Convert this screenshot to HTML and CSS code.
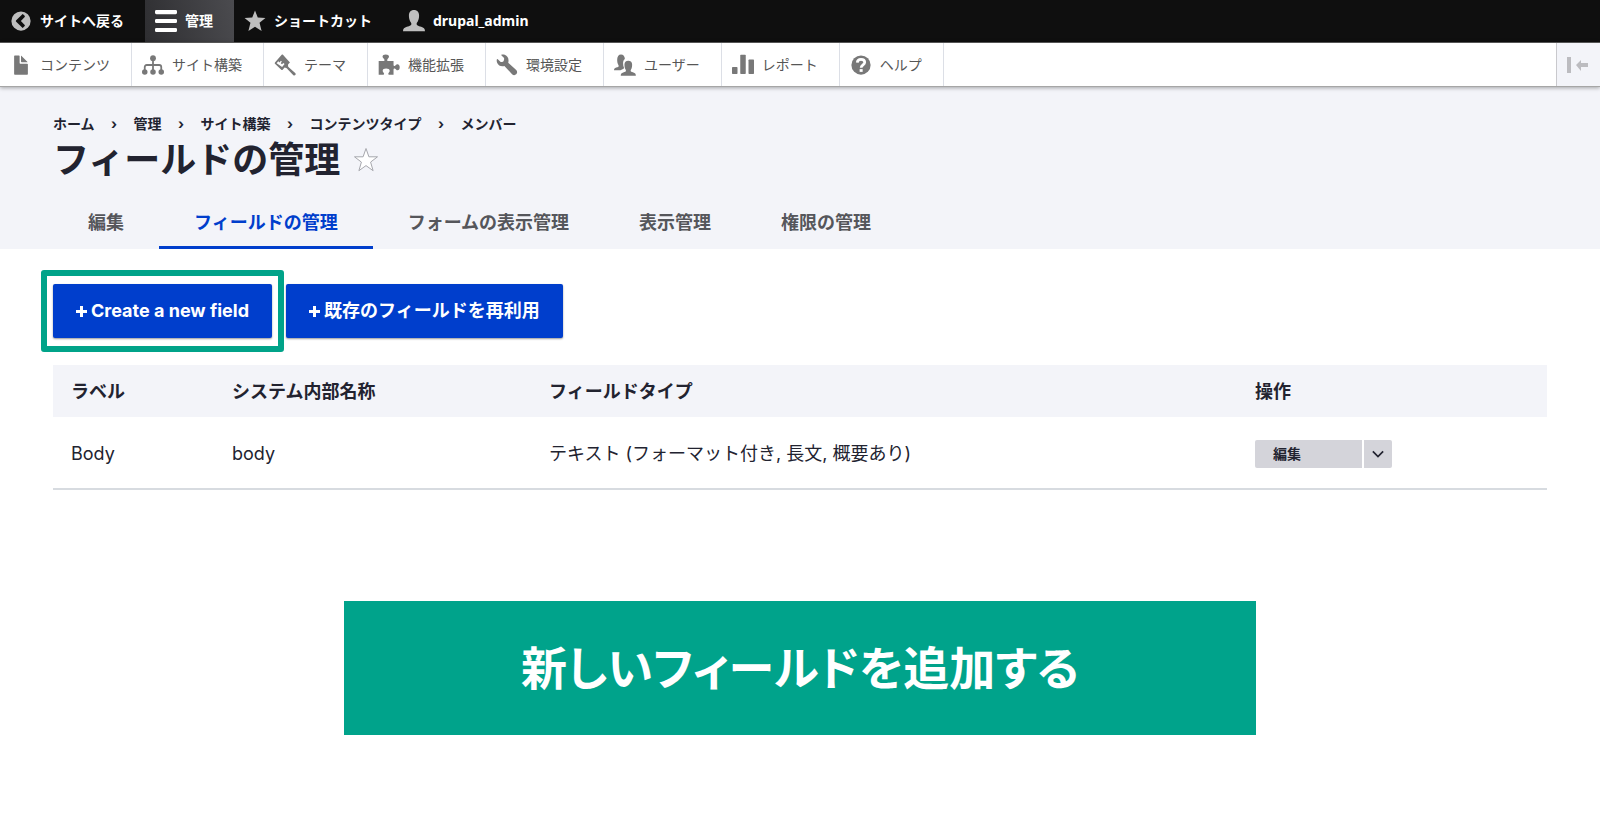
FILE: index.html
```html
<!DOCTYPE html>
<html lang="ja">
<head>
<meta charset="utf-8">
<title>フィールドの管理</title>
<link rel="stylesheet" href="styles.css">
</head>
<body>
<nav class="bar" aria-label="ツールバー">
  <a class="bar-item" href="#">
    <svg class="icon" viewBox="0 0 16 16"><path fill="#bebebe" fill-rule="evenodd" d="M8 1a7 7 0 1 0 0 14A7 7 0 0 0 8 1zm2.3 2.9L9.2 2.9 4.5 7.4c-.4.4-.4.8 0 1.2l4.7 4.5 1.5-1.5c.2-.2.2-.5 0-.7L7.900 8l2.800-2.900c.2-.2.2-.5 0-.7z"/></svg>
    <span>サイトへ戻る</span>
  </a>
  <a class="bar-item bar-item-active" href="#">
    <svg class="icon" viewBox="0 0 16 16"><path fill="#fff" d="M1 0h14a1 1 0 0 1 1 1v1a1 1 0 0 1-1 1H1a1 1 0 0 1-1-1V1a1 1 0 0 1 1-1zM1 6.500h14a1 1 0 0 1 1 1v1a1 1 0 0 1-1 1H1a1 1 0 0 1-1-1v-1a1 1 0 0 1 1-1zM1 13h14a1 1 0 0 1 1 1v1a1 1 0 0 1-1 1H1a1 1 0 0 1-1-1v-1a1 1 0 0 1 1-1z"/></svg>
    <span>管理</span>
  </a>
  <a class="bar-item" href="#">
    <svg class="icon" viewBox="0 0 16 16"><path fill="#bebebe" d="M8 .3l2 5.200 5.600.3-4.300 3.500 1.500 5.900L8 12.100l-4.800 3.100 1.500-5.900L.4 5.800 6 5.500z"/></svg>
    <span>ショートカット</span>
  </a>
  <a class="bar-item" href="#">
    <svg class="icon" viewBox="0 0 16 16"><path fill="#bebebe" d="M0 15.500c0-2 1-2.700 2.800-3.300 2.300-.8 3.200-1 3.300-2.100 0-.8-.5-1-1-2.100C4.600 6.800 4.300 5.600 4.300 4 4.300 1.500 5.700 0 8 0s3.700 1.500 3.700 4c0 1.600-.3 2.800-.8 4-.5 1.100-1 1.300-1 2.100.1 1.100 1 1.300 3.300 2.100 1.800.6 2.800 1.300 2.800 3.300z"/></svg>
    <span>drupal_admin</span>
  </a>
</nav>
<nav class="tray" aria-label="管理メニュー">
  <a class="tray-item" href="#">
    <svg class="icon" viewBox="0 0 16 16"><path d="M12.500 7h-5c-.3 0-.5-.2-.5-.5v-5c0-.3-.2-.5-.5-.5h-3c-.3 0-.5.2-.5.5v13c0 .3.2.5.5.5h9c.3 0 .5-.2.5-.5v-7c0-.3-.2-.5-.5-.5z"/><path d="M8.500 6h4c.3 0 .3-.2.100-.4L8.400 1.400c-.2-.2-.4-.1-.4.100v4c0 .3.2.5.5.5z"/></svg>
    <span>コンテンツ</span>
  </a>
  <a class="tray-item" href="#">
    <svg class="icon" viewBox="0 0 16 16"><circle cx="8" cy="3" r="2.100"/><circle cx="2" cy="13" r="2"/><circle cx="8" cy="13" r="2"/><circle cx="14" cy="13" r="2"/><path fill="none" stroke="#787878" stroke-width="1.300" d="M8 4v9M2 12v-2.500c0-1 .5-1.500 1.500-1.500h9c1 0 1.500.5 1.500 1.500V12"/></svg>
    <span>サイト構築</span>
  </a>
  <a class="tray-item" href="#">
    <svg class="icon" viewBox="0 0 16 16"><path fill-rule="evenodd" d="M5.600.6L.7 6.100c-.3.3-.3.700 0 1l4.600 4.300c.3.3.7.3 1 0l1.400-1.500 1.200.2c.5.1.7.5 1 .9l4 4.200c.6.6 1.200.5 1.600.1s.4-1-.1-1.500l-4.500-4c-.4-.4-.7-.6-.7-1.100l.1-1.200 1.300-1.400L6.500.6c-.3-.3-.6-.3-.9 0zM1.900 6.700l1.200-1.400.9.800 1-1.200.7.600-.8 1.200.9.800 1-1 .9.800-1.800 2.100z"/></svg>
    <span>テーマ</span>
  </a>
  <a class="tray-item" href="#">
    <svg class="icon" viewBox="0 0 16 16"><path d="M.5 5h3.700c.8 0 .7-.6.2-1.300C3.700 2.700 3.300 2.500 3.300 1.800 3.300.9 4.200.3 5.600.3s2.400.6 2.400 1.500c0 .7-.4.900-1 1.900C6.500 4.400 6.500 5 7.200 5h4.100v3c0 .9.600 1 1.200.5.700-.6.900-1 1.700-1 1 0 1.600 1 1.600 2.200s-.6 2.200-1.600 2.200c-.8 0-1-.5-1.700-1.100-.6-.5-1.200-.3-1.200.6V15H8.100c-.8 0-.8-.6-.3-1.300.5-.6.7-1 .7-1.500 0-1-1.100-1.600-2.600-1.600s-2.500.6-2.500 1.600c0 .5.200.9.700 1.500.5.700.5 1.300-.3 1.300H.5z"/></svg>
    <span>機能拡張</span>
  </a>
  <a class="tray-item" href="#">
    <svg class="icon" viewBox="0 0 16 16"><path d="M14.700 11.700L8.900 6.400c.7-2.700-.3-4.900-2.500-5.800C5.300.2 4.300.2 3.900.5c-.3.3 0 .5.3.8l1.500 1.500c.3.4.3.8.1 1.500-.2.800-.6 1.400-1.400 1.500-.6.100-1 0-1.400-.4L1.500 4C1.200 3.700.9 3.500.7 3.800c-.3.400-.3 1.600.2 2.700.8 1.800 2.800 2.900 5.200 2.200l5.600 6c.9.900 2.100.9 3 .1.900-.9.900-2.200 0-3.100z"/></svg>
    <span>環境設定</span>
  </a>
  <a class="tray-item" href="#">
    <svg class="icon" viewBox="0 0 16 16"><path d="M0 11.900c0-1.200.5-1.600 1.600-2 1.300-.4 1.800-.6 1.800-1.200 0-.5-.3-.7-.6-1.400C2.500 6.500 2.300 5.600 2.300 4.400 2.300 1.700 3.300.3 5.100.3c1.700 0 2.800 1.400 2.800 3.300-.9.700-1.300 1.700-1.300 3.100 0 1.300.2 2.400.6 3.200.2.500.3.700-.6 1-.9.300-1.500.6-1.900 1z"/><path d="M4.900 15.800c0-1.500.6-2 1.800-2.400 1.400-.5 2-.6 2-1.300 0-.5-.3-.7-.6-1.400-.3-.8-.5-1.700-.5-2.900 0-1.800 1-2.900 2.800-2.900s2.800 1.100 2.800 2.900c0 1.200-.2 2.100-.5 2.900-.3.700-.6.900-.6 1.400 0 .7.600.8 2 1.300 1.200.4 1.800.9 1.800 2.400z"/></svg>
    <span>ユーザー</span>
  </a>
  <a class="tray-item" href="#">
    <svg class="icon" viewBox="0 0 16 16"><rect x="0" y="9.500" width="4" height="5" rx=".5"/><rect x="6" y=".5" width="4" height="14" rx=".5"/><rect x="12" y="4" width="4" height="10.500" rx=".5"/></svg>
    <span>レポート</span>
  </a>
  <a class="tray-item" href="#">
    <svg class="icon" viewBox="0 0 16 16"><circle cx="8" cy="8" r="7"/><path fill="none" stroke="#fff" stroke-width="2" d="M5.300 6.300C5.400 4.600 6.500 3.900 8 3.900c1.600 0 2.700.8 2.700 2.100 0 1.900-2.600 1.900-2.600 4"/><rect x="7" y="11" width="2.200" height="2" fill="#fff"/></svg>
    <span>ヘルプ</span>
  </a>
  <button class="tray-toggle" type="button" aria-label="縦向き">
    <svg class="icon" viewBox="0 0 22 22"><path fill="#bcbcc0" d="M0 3h4v16H0zM9 11l5-5v3h7v4h-7v4z"/></svg>
  </button>
</nav>

<header class="page-header">
  <ol class="breadcrumb">
    <li><a href="#">ホーム</a></li>
    <li><a href="#">管理</a></li>
    <li><a href="#">サイト構築</a></li>
    <li><a href="#">コンテンツタイプ</a></li>
    <li><a href="#">メンバー</a></li>
  </ol>
  <div class="title-row">
    <h1>フィールドの管理</h1>
    <button class="star" type="button" aria-label="ショートカットに追加">
      <svg viewBox="0 0 26 26"><path fill="#fff" stroke="#a6a7ad" d="M13 1.500l2.900 8.300h8.600l-6.900 5.300 2.500 8.600-7.100-5.100-7.100 5.100 2.500-8.600-6.900-5.300h8.600z"/></svg>
    </button>
  </div>
  <nav class="tabs" aria-label="タブ">
    <a href="#">編集</a>
    <a class="tab-active" href="#">フィールドの管理</a>
    <a href="#">フォームの表示管理</a>
    <a href="#">表示管理</a>
    <a href="#">権限の管理</a>
  </nav>
</header>

<main class="content">
  <div class="actions">
    <div class="highlight">
      <a class="button" href="#"><svg class="plus" viewBox="0 0 11 11"><path d="M4 0h3v4h4v3H7v4H4V7H0V4h4z"/></svg>Create a new field</a>
    </div>
    <a class="button" href="#"><svg class="plus" viewBox="0 0 11 11"><path d="M4 0h3v4h4v3H7v4H4V7H0V4h4z"/></svg>既存のフィールドを再利用</a>
  </div>
  <table class="fields">
    <thead>
      <tr><th class="col-label">ラベル</th><th class="col-name">システム内部名称</th><th>フィールドタイプ</th><th class="col-actions">操作</th></tr>
    </thead>
    <tbody>
      <tr>
        <td>Body</td>
        <td>body</td>
        <td>テキスト (フォーマット付き, 長文, 概要あり)</td>
        <td>
          <div class="dropbutton">
            <a href="#">編集</a>
            <button type="button" aria-label="その他の操作"><svg viewBox="0 0 14 8"><path fill="none" stroke="#222330" stroke-width="2" d="M1 1l6 6 6-6"/></svg></button>
          </div>
        </td>
      </tr>
    </tbody>
  </table>
  <p class="banner">新しいフィールドを追加する</p>
</main>
</body>
</html>
```
FILE: styles.css
```css
* {
  box-sizing: border-box;
}

body {
  margin: 0;
  background: #fff;
  color: #222330;
  font: 18px/24px Inter, "Noto Sans CJK JP", sans-serif;
}

a {
  color: inherit;
  text-decoration: none;
}

button {
  border: 0;
  padding: 0;
  background: none;
}

svg {
  display: block;
}

.icon {
  width: 22px;
  height: 22px;
  flex: none;
}

.bar,
.tray {
  display: flex;
  font-family: "Noto Sans", "Noto Sans CJK JP", sans-serif;
  font-size: 14px;
  line-height: 20px;
}

.bar {
  background: #0f0f0f;
  color: #fff;
  font-weight: 700;
}

.bar-item,
.tray-item {
  display: flex;
  align-items: center;
  gap: 8px;
  padding: 10px 21px 10px 10px;
}

.bar-item-active {
  background: linear-gradient(75deg, #2e2e31, #4b4b4f);
}

.tray {
  position: relative;
  background: #fff;
  border-top: 1px solid #555;
  border-bottom: 1px solid #a6a6a6;
  box-shadow: 0 1px 4px #0005;
  color: #565656;
}

.tray-item {
  border-right: 1px solid #dcdfe6;
  padding-top: 11px;
}

.tray .icon {
  fill: #787878;
}

.tray-toggle {
  width: 44px;
  margin-left: auto;
  padding-left: 10px;
  border-left: 1px solid #c9c9cd;
  background: #f3f4f9;
}

.page-header {
  padding: 25px 53px 0;
  background: #f3f4f9;
}

.breadcrumb {
  display: flex;
  margin: 0;
  padding: 0;
  list-style: none;
  font-size: 14px;
  line-height: 24px;
  font-weight: 700;
}

.breadcrumb li + li::before {
  content: "›";
  display: inline-block;
  width: 39px;
  text-align: center;
}

.title-row {
  display: flex;
  align-items: center;
  gap: 13px;
}

h1 {
  margin: 0;
  font-size: 36px;
  line-height: 48px;
}

.star svg {
  width: 26px;
  height: 26px;
}

.tabs {
  display: flex;
  padding-top: 12px;
  color: #55565b;
  font-weight: 700;
}

.tabs a {
  padding: 15px 35px 11px;
  border-bottom: 3px solid transparent;
}

.tabs .tab-active {
  border-color: #003ecc;
  color: #003ecc;
}

.content {
  padding: 21px 53px 0;
}

.actions {
  display: flex;
  align-items: center;
  gap: 2px;
  margin: 0 0 13px -12px;
}

.highlight {
  padding: 8px 6px;
  border: 6px solid #00a389;
  border-radius: 3px;
}

.button {
  display: flex;
  align-items: center;
  gap: 4px;
  padding: 15px 23px;
  border-radius: 2px;
  background: #003ecc;
  box-shadow: 0 1px 2px #0006;
  color: #fff;
  font-weight: 700;
}

.plus {
  width: 11px;
  height: 11px;
  fill: #fff;
}

.fields {
  width: 100%;
  border-collapse: collapse;
  table-layout: fixed;
  text-align: left;
}

.fields th {
  padding: 15px 18px 13px;
  background: #f3f4f9;
}

.fields td {
  height: 72px;
  padding: 2px 18px 0;
  border-bottom: 2px solid #d7dbe0;
}

.col-label {
  width: 161px;
}

.col-name {
  width: 317px;
}

.col-actions {
  width: 310px;
}

.dropbutton {
  display: flex;
  gap: 2px;
  width: 137px;
  font-size: 14px;
  line-height: 28px;
  font-weight: 700;
}

.dropbutton a,
.dropbutton button {
  background: #d4d4da;
}

.dropbutton a {
  flex: 1;
  padding-left: 18px;
  border-radius: 2px 0 0 2px;
}

.dropbutton button {
  width: 28px;
  border-radius: 0 2px 2px 0;
}

.dropbutton svg {
  width: 12px;
  height: 8px;
  margin: auto;
}

.banner {
  width: 61%;
  margin: 111px auto 0;
  padding: 32px 0 38px;
  background: #00a38b;
  color: #fff;
  font: 700 46px/64px "Noto Sans CJK JP", sans-serif;
  font-feature-settings: "palt";
  text-align: center;
}
```
